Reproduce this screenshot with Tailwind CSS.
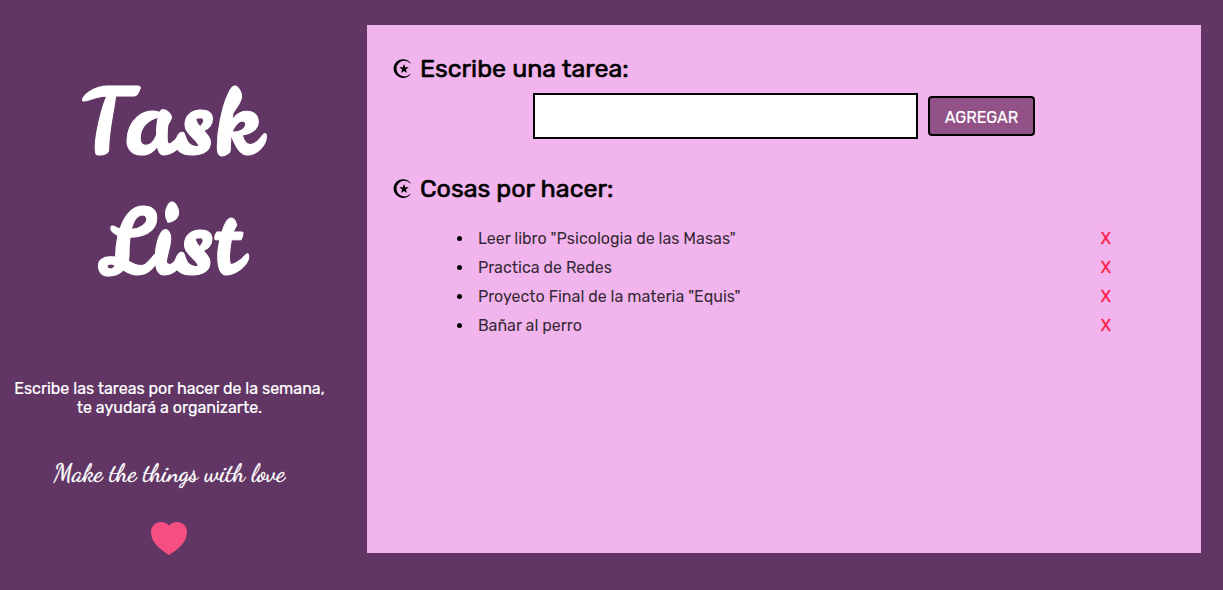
<!DOCTYPE html>
<html lang="es">
<head>
<meta charset="utf-8">
<title>Task List</title>
<meta name="viewport" content="width=device-width, initial-scale=1">
<script src="https://cdn.jsdelivr.net/npm/@tailwindcss/browser@4"></script>
</head>
<body class="flex min-h-screen bg-[#613664] pt-[25px] pb-[37px] font-['Rubik','Roboto',sans-serif] text-black">
  <aside class="flex w-[30%] shrink-0 flex-col items-center pr-7 text-center text-white">
    <h1 class="mt-[37px] font-['Leckerli_One','Pacifico',cursive] text-[90px] leading-[120px] font-normal [-webkit-text-stroke:1px_white]">Task<br>List</h1>
    <p class="mt-[77px] text-base leading-[19px] [-webkit-text-stroke:0.2px_white]">Escribe las tareas por hacer de la semana,<br>te ayudará a organizarte.</p>
    <p class="mt-10 font-['Dancing_Script','Lato',cursive] text-[25px] leading-8 [-webkit-text-stroke:0.3px_white]">Make the things with love</p>
    <svg class="mt-8 h-[34px] w-9" viewBox="0 0 36 34" fill="#f64e83" aria-hidden="true"><path d="M18 4.500C15 1.200 12 .9 9.800 1 4 1.300 0 5.500 0 11.500c0 9.500 9 17 18 22.500 9-5.500 18-13 18-22.500C36 5.500 32 1.300 26.200 1 24 .9 21 1.200 18 4.500Z"/></svg>
  </aside>
  <main class="mr-[22px] flex-1 self-start bg-[#f1b4ec] px-[25px] pt-7 pb-[213px]">
    <form>
      <h2 class="flex items-center gap-2 text-[25px] leading-8 [-webkit-text-stroke:0.6px_black]">
        <svg class="h-5 w-5" viewBox="0 0 20 20" stroke="none" aria-hidden="true"><path d="M18.700 4.200A9.400 9.400 0 1 0 18.700 15L18.200 14.700A7.800 7.800 0 1 1 18.200 4.500Z"/><path d="m12 5 1.200 3.300h3.600l-2.900 2.200 1 3.500-2.900-2.100-2.900 2.100 1-3.500-2.900-2.200h3.600Z"/></svg>
        <label for="task">Escribe una tarea:</label>
      </h2>
      <div class="mt-2 flex items-center justify-center gap-[10px]">
        <input id="task" type="text" class="h-[46px] w-[385px] border-2 border-black bg-white px-3 text-base">
        <button type="button" class="h-10 w-[107px] rounded-[4px] border-2 border-black bg-[#925187] pt-[3px] text-base text-white [-webkit-text-stroke:0.2px_white]">AGREGAR</button>
      </div>
    </form>
    <section>
      <h2 class="mt-[34px] flex items-center gap-2 text-[25px] leading-8 [-webkit-text-stroke:0.6px_black]">
        <svg class="h-5 w-5" viewBox="0 0 20 20" stroke="none" aria-hidden="true"><path d="M18.700 4.200A9.400 9.400 0 1 0 18.700 15L18.200 14.700A7.800 7.800 0 1 1 18.200 4.500Z"/><path d="m12 5 1.200 3.300h3.600l-2.900 2.200 1 3.500-2.900-2.100-2.900 2.100 1-3.500-2.900-2.200h3.600Z"/></svg>
        Cosas por hacer:
      </h2>
      <ul class="mt-[19px] mr-[65px] ml-[82px] list-disc text-base leading-[29px] font-normal">
        <li class="pl-1"><div class="flex justify-between"><span class="text-black/80">Leer libro "Psicologia de las Masas"</span><button type="button" aria-label="Eliminar" class="text-[#ff1f4b] [-webkit-text-stroke:0.3px_#ff1f4b]">X</button></div></li>
        <li class="pl-1"><div class="flex justify-between"><span class="text-black/80">Practica de Redes</span><button type="button" aria-label="Eliminar" class="text-[#ff1f4b] [-webkit-text-stroke:0.3px_#ff1f4b]">X</button></div></li>
        <li class="pl-1"><div class="flex justify-between"><span class="text-black/80">Proyecto Final de la materia "Equis"</span><button type="button" aria-label="Eliminar" class="text-[#ff1f4b] [-webkit-text-stroke:0.3px_#ff1f4b]">X</button></div></li>
        <li class="pl-1"><div class="flex justify-between"><span class="text-black/80">Bañar al perro</span><button type="button" aria-label="Eliminar" class="text-[#ff1f4b] [-webkit-text-stroke:0.3px_#ff1f4b]">X</button></div></li>
      </ul>
    </section>
  </main>
</body>
</html>
